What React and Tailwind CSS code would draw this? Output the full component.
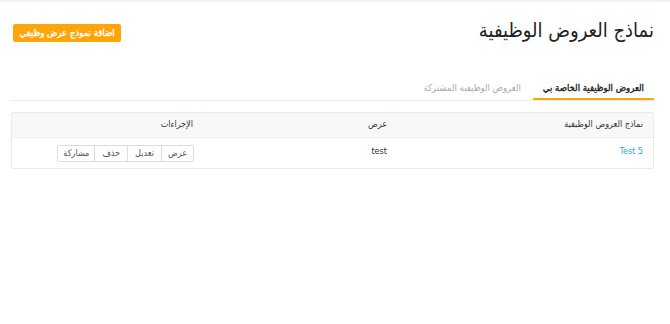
export default function App() {
    const font = { fontFamily: '"DejaVu Sans Condensed", "DejaVu Sans", sans-serif' };
    const bolder = { WebkitTextStroke: "0.35px currentColor" };

    return (
        <div dir="rtl" style={font} className="w-[670px] h-[324px] bg-white border-t-2 border-[#eef1f6] text-[#333]">
            <div className="px-[16px] pt-[15px] flex items-start justify-between">
                <h1 className="text-[20px] font-normal text-[#222] leading-[26px]">نماذج العروض الوظيفية</h1>
                <button style={bolder} className="mt-[7px] ml-[-3px] w-[108px] h-[18px] bg-[#ffa50a] text-white text-[9.5px] rounded-[2px] leading-[18px]">
                    اضافة نموذج عرض وظيفي
                </button>
            </div>

            <div className="mr-[16px] ml-[11px] mt-[37px] flex border-b border-[#eeeeee] text-[9.5px]">
                <div style={bolder} className="px-[10px] h-[20px] leading-[16px] text-[#222] border-b-2 border-[#ffa50a] mb-[-1px]">
                    العروض الوظيفية الخاصة بي
                </div>
                <div className="px-[12px] h-[20px] leading-[16px] text-[#aaa]">
                    العروض الوظيفية المشتركة
                </div>
            </div>

            <div className="mr-[16px] ml-[11px] mt-[11px] border border-[#eaeaea] rounded-[2px] text-[9px]">
                <div className="grid grid-cols-[255px_193px_1fr] bg-[#f8f8f8] border-b border-[#eeeeee] h-[25px] items-center">
                    <div className="pr-[10px] text-[#333]">نماذج العروض الوظيفية</div>
                    <div className="pr-[11px] text-[#333]">عرض</div>
                    <div className="pr-[12px] text-[#333]">الإجراءات</div>
                </div>
                <div className="grid grid-cols-[255px_193px_1fr] h-[30px] items-center">
                    <div className="pr-[10px] text-[#3a9ee4] mt-[-2px]" dir="ltr" style={{ textAlign: "right" }}>Test 5</div>
                    <div className="pr-[11px] mt-[-2px]">test</div>
                    <div className="pr-[11px]">
                        <div className="inline-flex border border-[#dddddd] rounded-[2px] h-[17px] text-[#555]">
                            <span className="px-[6px] leading-[15px]">عرض</span>
                            <span className="px-[7px] leading-[15px] border-r border-[#dddddd]">تعديل</span>
                            <span className="px-[7px] leading-[15px] border-r border-[#dddddd]">حذف</span>
                            <span className="px-[5px] leading-[15px] border-r border-[#dddddd]">مشاركة</span>
                        </div>
                    </div>
                </div>
            </div>
        </div>
    );
}
